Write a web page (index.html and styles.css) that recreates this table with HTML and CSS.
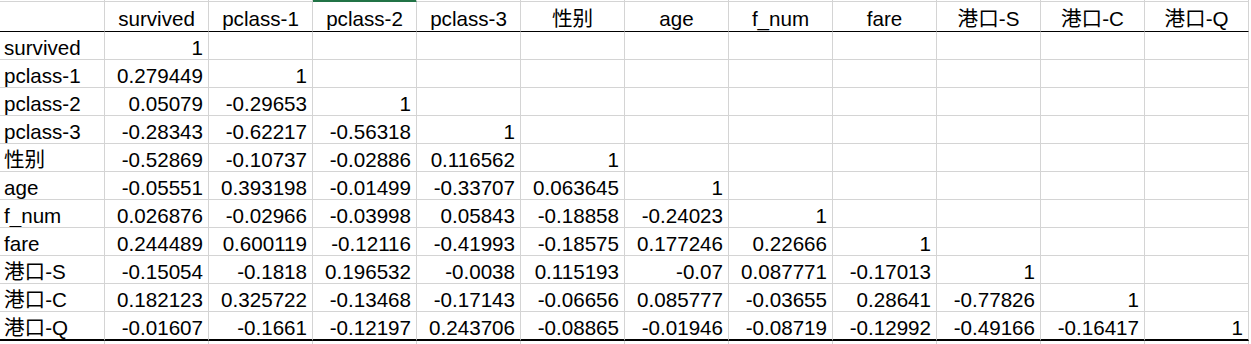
FILE: index.html
```html
<!DOCTYPE html>
<html lang="zh">
<head>
<meta charset="utf-8">
<title>相关系数矩阵</title>
<link rel="stylesheet" href="styles.css">
</head>
<body>
<table class="sheet">
  <colgroup>
    <col class="c-first">
    <col class="c"><col class="c"><col class="c"><col class="c"><col class="c"><col class="c">
    <col class="c"><col class="c"><col class="c"><col class="c"><col class="c">
  </colgroup>
  <tr class="spacer">
    <td></td><td></td><td></td><td class="active"></td><td></td><td></td><td></td><td></td><td></td><td></td><td></td><td></td>
  </tr>
  <tr class="head">
    <td></td><td>survived</td><td>pclass-1</td><td>pclass-2</td><td>pclass-3</td><td>性别</td><td>age</td><td>f_num</td><td>fare</td><td>港口-S</td><td>港口-C</td><td>港口-Q</td>
  </tr>
  <tr>
    <td class="lbl">survived</td><td>1</td><td></td><td></td><td></td><td></td><td></td><td></td><td></td><td></td><td></td><td></td>
  </tr>
  <tr>
    <td class="lbl">pclass-1</td><td>0.279449</td><td>1</td><td></td><td></td><td></td><td></td><td></td><td></td><td></td><td></td><td></td>
  </tr>
  <tr>
    <td class="lbl">pclass-2</td><td>0.05079</td><td>-0.29653</td><td>1</td><td></td><td></td><td></td><td></td><td></td><td></td><td></td><td></td>
  </tr>
  <tr>
    <td class="lbl">pclass-3</td><td>-0.28343</td><td>-0.62217</td><td>-0.56318</td><td>1</td><td></td><td></td><td></td><td></td><td></td><td></td><td></td>
  </tr>
  <tr>
    <td class="lbl">性别</td><td>-0.52869</td><td>-0.10737</td><td>-0.02886</td><td>0.116562</td><td>1</td><td></td><td></td><td></td><td></td><td></td><td></td>
  </tr>
  <tr>
    <td class="lbl">age</td><td>-0.05551</td><td>0.393198</td><td>-0.01499</td><td>-0.33707</td><td>0.063645</td><td>1</td><td></td><td></td><td></td><td></td><td></td>
  </tr>
  <tr>
    <td class="lbl">f_num</td><td>0.026876</td><td>-0.02966</td><td>-0.03998</td><td>0.05843</td><td>-0.18858</td><td>-0.24023</td><td>1</td><td></td><td></td><td></td><td></td>
  </tr>
  <tr>
    <td class="lbl">fare</td><td>0.244489</td><td>0.600119</td><td>-0.12116</td><td>-0.41993</td><td>-0.18575</td><td>0.177246</td><td>0.22666</td><td>1</td><td></td><td></td><td></td>
  </tr>
  <tr>
    <td class="lbl">港口-S</td><td>-0.15054</td><td>-0.1818</td><td>0.196532</td><td>-0.0038</td><td>0.115193</td><td>-0.07</td><td>0.087771</td><td>-0.17013</td><td>1</td><td></td><td></td>
  </tr>
  <tr>
    <td class="lbl">港口-C</td><td>0.182123</td><td>0.325722</td><td>-0.13468</td><td>-0.17143</td><td>-0.06656</td><td>0.085777</td><td>-0.03655</td><td>0.28641</td><td>-0.77826</td><td>1</td><td></td>
  </tr>
  <tr class="last">
    <td class="lbl">港口-Q</td><td>-0.01607</td><td>-0.1661</td><td>-0.12197</td><td>0.243706</td><td>-0.08865</td><td>-0.01946</td><td>-0.08719</td><td>-0.12992</td><td>-0.49166</td><td>-0.16417</td><td>1</td>
  </tr>
  <tr class="tail">
    <td></td><td></td><td></td><td></td><td></td><td></td><td></td><td></td><td></td><td></td><td></td><td></td>
  </tr>
</table>
</body>
</html>
```
FILE: styles.css
```css
html, body {
  margin: 0;
  padding: 0;
  background: #ffffff;
}

.sheet {
  border-collapse: separate;
  border-spacing: 0;
  table-layout: fixed;
  width: 1249px;
  font-family: "Liberation Sans", "Noto Sans CJK SC", sans-serif;
  font-size: 20.6px;
  color: #000000;
}

.c-first { width: 105px; }
.c { width: 104px; }

.sheet td {
  padding: 0 5px 0 0;
  border-right: 1px solid #d4d4d4;
  border-bottom: 1px solid #d4d4d4;
  height: 27px;
  line-height: 23px;
  vertical-align: bottom;
  text-align: right;
  white-space: nowrap;
  overflow: hidden;
}

.sheet td.lbl {
  text-align: left;
  padding: 0 0 0 4px;
}

.spacer td {
  height: 1px;
  line-height: 1px;
  font-size: 1px;
}

.spacer td.active {
  background: #217346;
  border-bottom-color: #217346;
}

.head td {
  height: 28px;
  text-align: center;
  padding: 0 0 1px 0;
  border-bottom: 1px solid #000000;
}

.last td {
  border-bottom: 2px solid #000000;
}

.tail td {
  height: 4px;
  line-height: 4px;
  font-size: 1px;
  border-bottom: none;
}
```
